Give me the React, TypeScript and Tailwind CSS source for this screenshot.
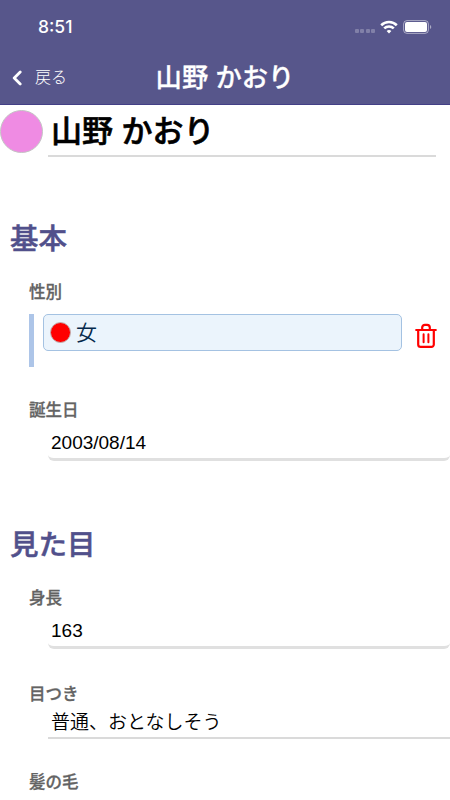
import React from 'react';

interface FieldProps {
    label: string;
    value: string;
    className: string;
    valueClass: string;
}

const Field: React.FC<FieldProps> = ({ label, value, className, valueClass }) => (
    <div className={className}>
        <h3 className="h-6 pl-[29px] text-[16.5px] leading-[26px] font-medium text-[#636363] [-webkit-text-stroke:0.3px]">{label}</h3>
        <div className={`ml-12 pl-[3px] text-[19px] text-black whitespace-nowrap ${valueClass}`}>{value}</div>
    </div>
);

const StatusBar: React.FC = () => (
    <div className="flex h-[54px] items-center pl-[38px] pr-[18px] text-white">
        <span className="font-['Inter'] text-[17.5px] leading-6 font-medium">8:51</span>
        <div className="ml-auto flex items-center">
            <div className="mt-2 mr-[5px] flex gap-[1.5px]">
                <i className="h-1 w-1 rounded-[1px] bg-white/25" />
                <i className="h-1 w-1 rounded-[1px] bg-white/25" />
                <i className="h-1 w-1 rounded-[1px] bg-white/25" />
                <i className="h-1 w-1 rounded-[1px] bg-white/25" />
            </div>
            <svg width="18" height="14" viewBox="0 0 18 14" fill="none" stroke="currentColor" strokeWidth="2.6">
                <path d="M1.2 5.2a11.2 11.2 0 0 1 15.6 0" />
                <path d="M4.2 8.4a7 7 0 0 1 9.6 0" />
                <path d="M9 13.6l-2.4-2.5a3.5 3.5 0 0 1 4.8 0z" fill="currentColor" stroke="none" />
            </svg>
            <svg className="ml-[5px]" width="29" height="14" viewBox="0 0 29 14">
                <rect x=".6" y=".6" width="24.8" height="12.8" rx="3.4" fill="none" stroke="#fff" strokeOpacity=".5" />
                <rect x="2" y="2" width="22" height="10" rx="2" fill="#fff" />
                <path d="M27 5v4a2.2 2.2 0 0 0 0-4" fill="#fff" fillOpacity=".5" />
            </svg>
        </div>
    </div>
);

const Header: React.FC = () => (
    <header className="h-[105px] border-b border-[#433f86] bg-[#57568b]">
        <StatusBar />
        <div className="grid h-12 grid-cols-[1fr_auto_1fr] items-center text-white">
            <button className="flex items-center pl-[12px]">
                <svg width="10" height="16" viewBox="0 0 10 16" fill="none" stroke="currentColor" strokeWidth="2.8" strokeLinecap="round" strokeLinejoin="round">
                    <path d="M8.2 2L2.2 8l6 6" />
                </svg>
                <span className="ml-[13px] text-[16px] leading-6 font-light">戻る</span>
            </button>
            <h1 className="text-[26.3px] leading-8 font-medium [-webkit-text-stroke:0.3px]">山野 かおり</h1>
        </div>
    </header>
);

const TrashIcon: React.FC = () => (
    <svg width="22" height="26" viewBox="0 0 22 26" fill="none" stroke="#f00" strokeWidth="2.2" strokeLinecap="round" strokeLinejoin="round">
        <path d="M1.2 7h19.6M3.2 7v14.5a2.4 2.4 0 0 0 2.4 2.4h10.8a2.4 2.4 0 0 0 2.4-2.4V7M7.2 7V4.5a2.7 2.7 0 0 1 2.7-2.7h2.2a2.7 2.7 0 0 1 2.7 2.7V7" />
        <path d="M8.6 11.2v8M13.4 11.2v8" strokeWidth="2" />
    </svg>
);

const App: React.FC = () => {
    return (
        <div className="h-[800px] w-[450px] overflow-hidden bg-white font-['Liberation_Sans','Noto_Sans_CJK_JP',sans-serif]">
            <Header />
            <div className="flex h-[52px]">
                <div className="mt-[5px] h-[43px] w-[43px] rounded-full border border-[#c4c4c4] bg-[#ef8be3]" />
                <div className="ml-[5px] w-[388px] border-b-2 border-[#dadada] pl-[3px] text-[31px] leading-[54px] font-medium text-black [-webkit-text-stroke:0.6px]">山野 かおり</div>
            </div>

            <h2 className="mt-[61px] h-10 pl-[10px] text-[28.5px] leading-[42px] font-medium text-[#51508b] [-webkit-text-stroke:0.5px]">基本</h2>
            <h3 className="mt-[21px] h-6 pl-[29px] text-[16.5px] leading-[26px] font-medium text-[#636363] [-webkit-text-stroke:0.3px]">性別</h3>
            <div className="mt-[11px] ml-[29px] flex h-[53px] border-l-[5px] border-[#adc5e8] pl-[9px]">
                <div className="flex h-[37px] w-[359px] items-center rounded-[5px] border border-[#a4c2e2] bg-[#ebf4fc] pl-[6px]">
                    <div className="h-[21px] w-[21px] rounded-full border border-[#c0b0b0] bg-[#f00]" />
                    <span className="ml-[5px] text-[21px] leading-8 font-[350] text-[#05294b]">女</span>
                </div>
                <button aria-label="削除" className="mt-[9px] ml-[13px] h-[26px]"><TrashIcon /></button>
            </div>
            <Field label="誕生日" value="2003/08/14" className="mt-[30px] h-[64px]" valueClass="mt-[3px] h-[37px] rounded-[6px] border-b-[3px] border-[#e0e0e0] leading-[38px]" />

            <h2 className="mt-[63px] h-10 pl-[10px] text-[28.5px] leading-[42px] font-medium text-[#51508b] [-webkit-text-stroke:0.5px]">見た目</h2>
            <Field label="身長" value="163" className="mt-[21px] h-[64px]" valueClass="mt-[3px] h-[37px] rounded-[6px] border-b-[3px] border-[#e0e0e0] leading-[38px]" />
            <Field label="目つき" value="普通、おとなしそう" className="mt-[32px] h-[58px]" valueClass="h-[34px] border-b-2 border-[#dadada] font-[350] leading-[35px]" />
            <Field label="髪の毛" value="" className="mt-[30px]" valueClass="h-[34px] leading-[31px]" />
        </div>
    );
};

export default App;
